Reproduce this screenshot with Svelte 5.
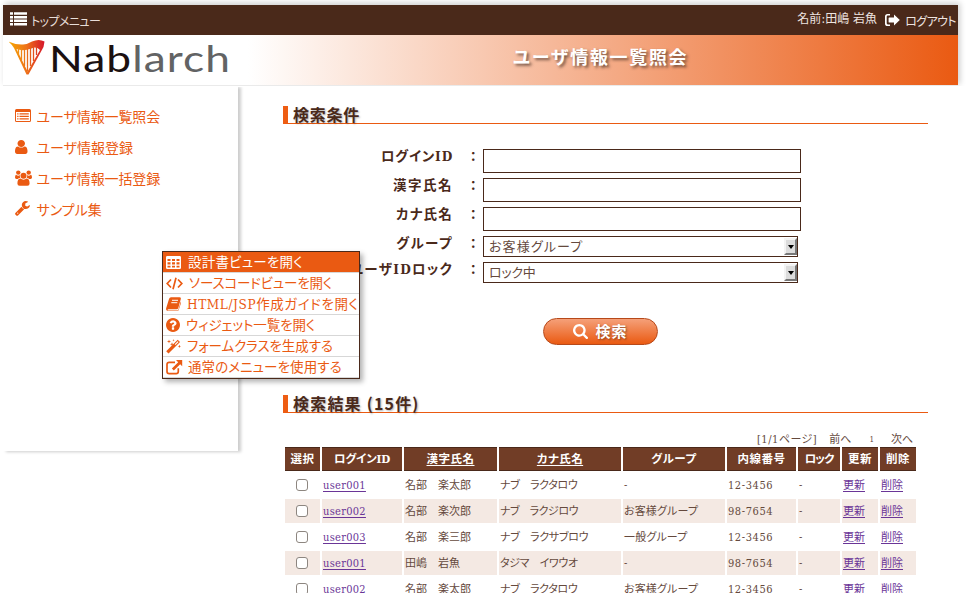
<script>
  // Adjusts tracking so that a label fills the given width.
  function fit(node, width) {
    const apply = () => {
      node.style.letterSpacing = '0px';
      const natural = node.offsetWidth;
      const count = [...node.textContent].length;
      node.style.letterSpacing = (width - natural) / count + 'px';
    };
    apply();
    document.fonts?.ready.then(apply);
  }

  const nav = [
    { icon: 'listalt', label: 'ユーザ情報一覧照会', w: 124 },
    { icon: 'user', label: 'ユーザ情報登録', w: 97 },
    { icon: 'users', label: 'ユーザ情報一括登録', w: 124 },
    { icon: 'wrench', label: 'サンプル集', w: 65 }
  ];
  const menu = [
    { icon: 'table', label: '設計書ビューを開く', w: 115, x: 25 },
    { icon: 'code', label: 'ソースコードビューを開く', w: 143, x: 26 },
    { icon: 'book', label: 'HTML/JSP作成ガイドを開く', w: 171, x: 24 },
    { icon: 'question', label: 'ウィジェット一覧を開く', w: 129, x: 23 },
    { icon: 'magic', label: 'フォームクラスを生成する', w: 146, x: 24 },
    { icon: 'external', label: '通常のメニューを使用する', w: 154, x: 25 }
  ];
  const fields = [
    { label: 'ログインID', w: 72 },
    { label: '漢字氏名', w: 60 },
    { label: 'カナ氏名', w: 57 },
    { label: 'グループ', w: 57, value: 'お客様グループ', vw: 94 },
    { label: 'ユーザIDロック', w: 103, value: 'ロック中', vw: 47 }
  ];
  const heads = [
    ['選択', 24], ['ログインID', 56], ['漢字氏名', 48, true], ['カナ氏名', 46, true], ['グループ', 45],
    ['内線番号', 48], ['ロック', 29], ['更新', 24], ['削除', 24]
  ];
  const rows = [
    ['user001', ['名部　楽太郎', 66], ['ナブ　ラクタロウ', 77], ['-', 5], '12-3456'],
    ['user002', ['名部　楽次郎', 66], ['ナブ　ラクジロウ', 78], ['お客様グループ', 74], '98-7654'],
    ['user003', ['名部　楽三郎', 66], ['ナブ　ラクサブロウ', 88], ['一般グループ', 64], '12-3456'],
    ['user001', ['田嶋　岩魚', 55], ['タジマ　イワウオ', 78], ['-', 5], '98-7654'],
    ['user002', ['名部　楽太郎', 66], ['ナブ　ラクタロウ', 77], ['お客様グループ', 74], '12-3456']
  ];
</script>

{#snippet icon(name)}
  {#if name === 'list'}
    <svg width="17" height="14" viewBox="0 0 17 14" fill="currentColor"><path d="M0 .3h3v2.500H0zM4 .3h13v2.500H4zM0 3.900h3v2.500H0zM4 3.900h13v2.500H4zM0 7.500h3V10H0zM4 7.500h13V10H4zM0 11.100h3v2.500H0zM4 11.100h13v2.500H4z" /></svg>
  {:else if name === 'logout'}
    <svg width="15" height="12" viewBox="0 0 15 12" fill="currentColor"><path d="M5 0v1.600H2.800Q1.700 1.600 1.700 2.700v6.600q0 1.100 1.100 1.100H5V12H2.600Q0 12 0 9.400V2.600Q0 0 2.600 0zM9 .5 14.800 6 9 11.500V8.600H4.200q-.6 0-.6-.6V4q0-.6.6-.6H9z" /></svg>
  {:else if name === 'listalt'}
    <svg width="16" height="13" viewBox="0 0 16 13" fill="currentColor"><path fill-rule="evenodd" d="M1.500 0h13Q16 0 16 1.500v10q0 1.500-1.500 1.500h-13Q0 13 0 11.500v-10Q0 0 1.500 0zM1 3v8.400q0 .6.6.6h12.800q.6 0 .6-.6V3z" /><path d="M2.200 4.200h1.300v1.200H2.200zM4.500 4.200h9.300v1.200H4.500zM2.200 6.700h1.300v1.200H2.200zM4.500 6.700h9.300v1.200H4.500zM2.200 9.200h1.300v1.200H2.200zM4.500 9.200h9.300v1.200H4.500z" /></svg>
  {:else if name === 'user'}
    <svg width="12.500" height="14" viewBox="256 128 1280 1536" preserveAspectRatio="none" fill="currentColor"><path d="M1536 1399q0 109-62.500 187t-150.500 78h-854q-88 0-150.500-78t-62.500-187q0-85 8.500-160.500t31.500-152 58.500-131 94-89 134.500-34.500q131 128 313 128t313-128q76 0 134.500 34.500t94 89 58.500 131 31.500 152 8.500 160.500zm-256-887q0 159-112.500 271.500t-271.500 112.500-271.500-112.500-112.500-271.500 112.500-271.500 271.500-112.500 271.500 112.500 112.500 271.500z" /></svg>
  {:else if name === 'users'}
    <svg width="17" height="16" viewBox="0 0 17 16" fill="currentColor"><circle cx="3.300" cy="2.600" r="2.200" /><circle cx="13.700" cy="2.600" r="2.200" /><path d="M1 4.800Q3.400 6.600 5 5.100q-.5 1.700.3 3Q3.600 8 2.800 9H1.400Q0 9 0 7.600 0 5.400 1 4.800zM16 4.800Q13.600 6.600 12 5.100q.5 1.700-.3 3 1.700-.1 2.500.9h1.400Q17 9 17 7.600 17 5.400 16 4.800z" /><circle cx="8.500" cy="5.700" r="3" /><path d="M5.300 8.500q3.200 2.300 6.400 0 2.900.2 2.900 5 0 2.200-2.200 2.200H4.600q-2.200 0-2.200-2.200 0-4.800 2.900-5z" /></svg>
  {:else if name === 'wrench'}
    <svg width="15" height="15" viewBox="80 128 1660 1660" fill="currentColor"><path d="M448 1472q0-26-19-45t-45-19-45 19-19 45 19 45 45 19 45-19 19-45zm644-420l-682 682q-37 37-90 37-52 0-91-37l-106-108q-38-36-38-90 0-53 38-91l681-681q39 98 114.500 173.500t173.500 114.500zm634-435q0 39-23 106-47 134-164.500 217.500t-258.500 83.500q-185 0-316.500-131.500t-131.500-316.500 131.500-316.500 316.500-131.500q58 0 121.500 16.500t107.500 46.500q16 11 16 28t-16 28l-293 169v224l193 107q5-3 79-48.500t135.500-81 70.500-35.500q15 0 23.500 10t8.500 25z" /></svg>
  {:else if name === 'table'}
    <svg width="15" height="13" viewBox="0 0 15 13" fill="currentColor"><path fill-rule="evenodd" d="M1.300 0h12.400Q15 0 15 1.300v10.400q0 1.300-1.300 1.300H1.300Q0 13 0 11.700V1.300Q0 0 1.300 0zM1.500 3v2.100h3V3zM6 3v2.100h3V3zM10.500 3v2.100h3V3zM1.500 6.300v2.200h3V6.300zM6 6.300v2.200h3V6.300zM10.500 6.300v2.200h3V6.300zM1.500 9.700v1.900h3V9.700zM6 9.700v1.900h3V9.700zM10.500 9.700v1.900h3V9.700z" /></svg>
  {:else if name === 'code'}
    <svg width="17" height="13" viewBox="0 0 17 13" fill="none" stroke="currentColor" stroke-width="1.700"><path d="M5 2.500 1.200 6.500 5 10.500M12 2.500l3.800 4-3.800 4M10 .8 7 12.200" /></svg>
  {:else if name === 'book'}
    <svg width="15" height="14" viewBox="0 0 15 14"><path fill="currentColor" d="M5 .3h8.500q1.700.1 1.300 1.700L12.300 11q-.4 1.300-1.800 1.300H2.600q-.9 0-1.100.6-.1.600 1.200.6h8.600q.8 0 1.100-.9l2.400-8.100q.5.500.2 1.400l-2.300 7q-.4 1.100-1.500 1.100H2.300Q.6 14 .1 12.400 0 11.700.3 10.700L3 2Q3.500.3 5 .3z" /><path d="M6 3.300h6M5.300 5.700h6" stroke="#fff" stroke-width="1" /></svg>
  {:else if name === 'question'}
    <svg width="14" height="14" viewBox="128 128 1536 1536" fill="currentColor"><path d="M1024 1376v-192q0-14-9-23t-23-9h-192q-14 0-23 9t-9 23v192q0 14 9 23t23 9h192q14 0 23-9t9-23zm256-672q0-88-55.500-163t-138.500-116-170-41q-243 0-371 213-15 24 8 42l132 100q7 6 19 6 16 0 25-12 53-68 86-92 34-24 86-24 48 0 85.500 26t37.500 59q0 38-20 61t-68 45q-63 28-115.500 86.500t-52.500 125.500v36q0 14 9 23t23 9h192q14 0 23-9t9-23q0-19 21.500-49.500t54.500-49.500q32-18 49-28.500t46-35 44.500-48 28-60.500 12.500-81zm384 192q0 209-103 385.500t-279.500 279.500-385.500 103-385.500-103-279.500-279.500-103-385.500 103-385.500 279.500-279.500 385.500-103 385.500 103 279.500 279.500 103 385.500z" /></svg>
  {:else if name === 'magic'}
    <svg width="15" height="15" viewBox="0 0 15 15" fill="currentColor"><path fill-rule="evenodd" d="M11.700.7 14 3 2.500 14.500.2 12.200zM11.700 2.200 8.700 5.200l.8.800 3-3z" /><path d="M3 .4l.5 1.600 1.600.5-1.600.5L3 4.600l-.5-1.600-1.600-.5 1.600-.5zM7.500 0l.3.900.9.300-.9.300-.3.900-.3-.9-.9-.3.900-.3zM6 3.200l.5 1.500 1.500.5-1.500.5L6 7.200l-.5-1.500L4 5.200l1.500-.5zM13.400 5.800l.5 1.200 1.100.4-1.100.4-.5 1.200-.5-1.200-1.100-.4 1.100-.4z" /></svg>
  {:else if name === 'external'}
    <svg width="17" height="15" viewBox="0 0 17 15"><path d="M9 2.400H3.200Q1 2.400 1 4.600v6.800q0 2.200 2.200 2.200h6.900q2.200 0 2.200-2.200V8.300" fill="none" stroke="currentColor" stroke-width="1.700" /><path fill="currentColor" d="M10 0h6.200v6.200l-2-2-6.400 6.300-1.900-1.900 6.300-6.400z" /></svg>
  {:else if name === 'search'}
    <svg width="15" height="15" viewBox="64 128 1664 1664" fill="currentColor"><path d="M1216 832q0-185-131.500-316.500t-316.500-131.500-316.500 131.500-131.500 316.500 131.500 316.500 316.500 131.500 316.500-131.500 131.500-316.500zm512 832q0 52-38 90t-90 38q-54 0-90-38l-343-342q-179 124-399 124-143 0-273.500-55.500t-225-150-150-225-55.500-273.500 55.500-273.500 150-225 225-150 273.500-55.500 273.500 55.500 225 150 150 225 55.500 273.500q0 220-124 399l343 343q37 37 37 90z" /></svg>
  {/if}
{/snippet}

<div class="page">
  <header>
    <div class="topbar">
      <a class="top" href="#top">{@render icon('list')}<span use:fit={69}>トップメニュー</span></a>
      <div class="account">
        <span class="name" use:fit={80}>名前:田嶋 岩魚</span>
        {@render icon('logout')}
        <span class="logout" use:fit={51}>ログアウト</span>
      </div>
    </div>
    <div class="brand">
      <svg class="harp" width="37" height="36" viewBox="0 0 37 36">
        <defs>
          <linearGradient id="harp" x1="0" x2="1"><stop offset="0" stop-color="#f6a800" /><stop offset=".5" stop-color="#ee7219" /><stop offset="1" stop-color="#d5152b" /></linearGradient>
          <linearGradient id="strings" gradientUnits="userSpaceOnUse" x1="8" y1="0" x2="30" y2="0"><stop offset="0" stop-color="#f39a12" /><stop offset="1" stop-color="#dc3a22" /></linearGradient>
        </defs>
        <path fill="url(#harp)" fill-rule="evenodd" d="M-.5 2.500Q7 6 14 5.500 19 5 23 2.500 30-.5 35.500 2.500L34.500 8 19.500 35.500H17.500L5 9Q3 5.500-.5 2.500zM7.500 10 18.600 32.500 31 11Q27 7 22.500 9.500 14 12.500 7.500 10z" />
        <path stroke="url(#strings)" stroke-width="1.300" d="M9.500 9v7M12.500 9v12M15.500 9v18M18.500 9v23M21.500 8v19M24.500 7v15M27.500 7v9" fill="none" />
      </svg>
      <div class="logo"><span use:fit={148}>Nab<em>larch</em></span></div>
      <h1><span use:fit={175}>ユーザ情報一覧照会</span></h1>
    </div>
  </header>

  <div class="body">
    <aside>
      {#each nav as n}
        <a href="#nav"><i>{@render icon(n.icon)}</i><span use:fit={n.w}>{n.label}</span></a>
      {/each}
    </aside>
    <main>
      <h2><span use:fit={67}>検索条件</span></h2>
      <div class="form">
        {#each fields as f}
          <div class="field" class:sel={f.value}>
            <label for={f.label}><span use:fit={f.w}>{f.label}</span></label>
            <b>：</b>
            {#if f.value}
              <div class="select"><span use:fit={f.vw}>{f.value}</span><em></em></div>
            {:else}
              <input id={f.label} type="text" />
            {/if}
          </div>
        {/each}
      </div>
      <button>{@render icon('search')}<span use:fit={32}>検索</span></button>
      <h2><span use:fit={127}>検索結果 (15件)</span></h2>
      <div class="pager">
        <span use:fit={60}>[1/1ページ]</span><span use:fit={22}>前へ</span><small>1</small><span use:fit={22}>次へ</span>
      </div>
      <table>
        <colgroup>
          {#each [35, 80, 93, 122, 102, 69, 42, 36, 36] as w}<col style="width: {w}px" />{/each}
        </colgroup>
        <thead>
          <tr>{#each heads as [t, w, sorted]}<th><span class:sorted use:fit={w}>{t}</span></th>{/each}</tr>
        </thead>
        <tbody>
          {#each rows as [id, name, kana, group, tel]}
            <tr>
              <td class="check"><i></i></td>
              <td><a href="#user"><span use:fit={43}>{id}</span></a></td>
              <td><span use:fit={name[1]}>{name[0]}</span></td>
              <td><span use:fit={kana[1]}>{kana[0]}</span></td>
              <td><span use:fit={group[1]}>{group[0]}</span></td>
              <td><span use:fit={45}>{tel}</span></td>
              <td><span>-</span></td>
              <td><a href="#edit"><span use:fit={22}>更新</span></a></td>
              <td><a href="#delete"><span use:fit={22}>削除</span></a></td>
            </tr>
          {/each}
        </tbody>
      </table>
    </main>
  </div>

  <div class="menu">
    {#each menu as m, i}
      <div class="item" class:on={i === 0}><i style="width: {m.x - 3}px">{@render icon(m.icon)}</i><span use:fit={m.w}>{m.label}</span></div>
    {/each}
  </div>
</div>

<style>
  :global(body) { margin: 0; background: #fff; overflow: hidden; }
  .page {
    position: relative; width: 966px; height: 593px; overflow: hidden; box-sizing: border-box; padding: 5px 0 0 3px;
    font-family: 'DejaVu Serif Condensed', 'DejaVu Serif', 'Noto Sans CJK JP', serif; font-size: 14px; color: #4a291a;
    font-feature-settings: 'palt';
  }
  span { display: inline-block; white-space: pre; }
  svg { display: block; flex: none; }
  a { color: inherit; text-decoration: none; }
  header { width: 955px; height: 80px; box-shadow: 2px -2px 6px rgba(0, 0, 0, .2); border-bottom: 1px solid #eaeaea; clip-path: inset(-8px -8px 0 -8px); }
  .topbar { display: flex; justify-content: space-between; height: 30px; background: #4a291a; color: #fff; font-size: 12px; }
  .top { display: flex; align-items: center; gap: 4px; padding-left: 7px; height: 28px; }
  .top span { padding-top: 2px; color: #e8ddd8; }
  .account { display: flex; align-items: center; height: 28px; padding-right: 2px; color: #eee4e0; }
  .account svg { margin: 2px 5px 0 8px; color: #fff; }
  .name { padding-bottom: 4px; }
  .logout { padding-top: 2px; }
  .brand { display: flex; height: 50px; background: linear-gradient(90deg, #fff 0, #fff 245px, #ea5a12 955px); }
  .harp { margin: 4px 0 0 6px; }
  .logo { margin-left: 3px; width: 193px; line-height: 47px; font-family: Lato, sans-serif; font-size: 36px; color: #1b1010; white-space: nowrap; }
  .logo span { transform: scaleX(1.23); transform-origin: 0 50%; }
  .logo em { font-style: normal; color: #626364; }
  h1 { margin: 0 0 0 271px; font-size: 18px; line-height: 45px; color: #fff; font-weight: 700; text-shadow: 2px 2px 3px rgba(60, 40, 30, .7); }
  .body { display: flex; }
  aside { width: 235px; height: 351px; padding-top: 14px; background: #fff; box-shadow: 3px 1px 3px rgba(0, 0, 0, .2); clip-path: inset(1px -8px -8px 0); font-size: 14px; color: #ea5a12; }
  aside a { display: flex; align-items: center; height: 31px; padding-left: 12px; }
  aside i { width: 21.500px; }
  main { width: 645px; padding: 20px 0 0 45px; }
  h2 { margin: 0; height: 17px; border-left: 5px solid #ee5d13; border-bottom: 1px solid #ea5a12; padding-left: 5px; font: bold 16px/17px 'Noto Sans CJK JP', sans-serif; color: #4a291a; text-shadow: 1px 1px 2px rgba(0, 0, 0, .3); }
  .form { padding-top: 25px; }
  .field { display: flex; height: 29px; }
  .field.sel { height: 26px; }
  .field label { width: 170px; display: flex; justify-content: flex-end; line-height: 15px; font-weight: bold; font-size: 13.500px; }
  .field b { width: 30px; box-sizing: border-box; padding-left: 17px; line-height: 14px; font-size: 13px; font-family: 'Noto Sans CJK JP', sans-serif; }
  input { box-sizing: border-box; width: 318px; height: 24px; border: 1px solid #4a291a; padding: 0; margin: 0; background: #fff; }
  .select { box-sizing: border-box; display: flex; justify-content: space-between; width: 315px; height: 21px; border: 1px solid #4a291a; padding: 1px 0 1px 5px; line-height: 18px; font-size: 13px; color: #65493d; }
  .select em { box-sizing: border-box; width: 13px; height: 17px; margin: 0; border: 2px solid; border-color: #f3f3f3 #777 #777 #f3f3f3; background: #dcdcdc; display: flex; justify-content: center; align-items: center; }
  .select em::after { content: ''; border: 3px solid transparent; border-top: 4px solid #000; border-bottom: 0; }
  button { display: flex; align-items: center; justify-content: center; gap: 7px; width: 115px; height: 27px; margin: 30px 0 50px 260px; padding: 0; border: 1px solid #b7491a; border-radius: 14px; background: linear-gradient(#f5a079, #ea5a12); color: #fff; font: bold 15px/24px 'Noto Sans CJK JP', sans-serif; text-shadow: 1px 1px 2px rgba(70, 40, 20, .6); }
  button span { padding-bottom: 1px; }
  .pager { display: flex; align-items: center; height: 16px; margin-top: 17px; padding-left: 474px; font-size: 11px; color: #65493d; }
  .pager span:nth-child(2) { margin-left: 12px; }
  .pager small { margin: 2px 17px 0 18px; font-size: 8px; }
  table { table-layout: fixed; width: 635px; margin: -1px 0 0; border-spacing: 2px; font-size: 12px; line-height: 16px; color: #65493d; }
  th, td { padding: 0 0 0 1px; height: 24px; white-space: nowrap; box-sizing: border-box; text-align: left; }
  th { padding: 0; background: #713d26; color: #fff; border-top: 1px solid #4a291a; border-bottom: 1px solid #4a291a; text-align: center; font-size: 11.500px; }
  td { padding-top: 2px; }
  td span { font-size: 11px; vertical-align: top; }
  .sorted { text-decoration: underline; text-underline-offset: 2px; }
  tbody tr:nth-child(even) td { background: #f4e9e3; }
  td a { color: #6a3597; }
  td a span { text-decoration: underline; text-underline-offset: 2px; }
  .check { padding-top: 0; }
  .check i { display: block; box-sizing: border-box; width: 12px; height: 12px; margin-left: 10px; border: 1px solid #8d8680; border-radius: 3px; background: #fff; }
  .menu { position: absolute; left: 162px; top: 251px; width: 196px; height: 126px; border: 1px solid #4a291a; background: #fff; box-shadow: 3px 3px 5px rgba(0, 0, 0, .3); color: #ea5a12; font-size: 13.500px; }
  .item { box-sizing: border-box; display: flex; align-items: center; height: 21px; border-bottom: 1px solid #d7d7d7; padding-left: 3px; line-height: 19px; }
  .item i { flex: none; }
  .item.on { background: #ea5a12; color: #fff; }
</style>
